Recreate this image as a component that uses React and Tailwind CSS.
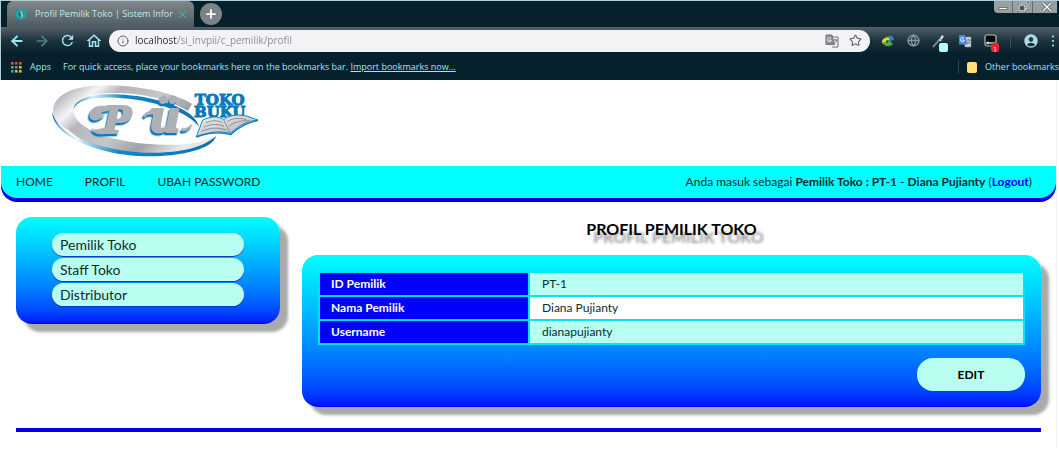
import React from "react";
import { ArrowLeft, ArrowRight, Globe, Info, Plus, Star, X } from "lucide-react";
import { MdAccountCircle, MdOutlineHome, MdRefresh } from "react-icons/md";

const menu = ["HOME", "PROFIL", "UBAH PASSWORD"];
const side = ["Pemilik Toko", "Staff Toko", "Distributor"];
const rows = [
  { id: "id", label: "ID Pemilik", value: "PT-1" },
  { id: "nama", label: "Nama Pemilik", value: "Diana Pujianty" },
  { id: "user", label: "Username", value: "dianapujianty" },
];
const dots = ["#e0503f", "#e0503f", "#e0503f", "#45b06a", "#4a90e2", "#e8b93c", "#45b06a", "#e8b93c", "#e8b93c"];

function Favicon() {
  return (
    <svg viewBox="0 0 12 12" className="size-3 shrink-0" aria-hidden="true">
      <circle cx="6" cy="6" r="5.6" fill="#12a5b4" />
      <path d="M5 2.2 7.2 4 8 8.2 6.6 10 5.6 6.5Z" fill="#f0b040" />
      <path d="M4.2 3 6 6.5 5.6 9 3.5 6Z" fill="#0d6f86" />
    </svg>
  );
}

function Logo() {
  return (
    <svg viewBox="0 0 690 255" className="block h-[85px] w-[230px]" role="img" aria-label="PU Toko Buku">
      <defs>
        <linearGradient id="silver" x1="0" y1="0" x2="1" y2="0.5">
          <stop offset="0" stopColor="#8f9398" />
          <stop offset="0.12" stopColor="#bfc1c4" />
          <stop offset="0.24" stopColor="#f5f5f6" />
          <stop offset="0.36" stopColor="#b4b6ba" />
          <stop offset="0.6" stopColor="#c6c7ca" />
          <stop offset="0.8" stopColor="#9fa2a8" />
          <stop offset="1" stopColor="#e8e8ea" />
        </linearGradient>
        <linearGradient id="edge" x1="0" y1="0" x2="1" y2="0">
          <stop offset="0" stopColor="#1d86c8" />
          <stop offset="0.15" stopColor="#d9effa" />
          <stop offset="0.4" stopColor="#1187c9" />
          <stop offset="1" stopColor="#0a6fb5" />
        </linearGradient>
        <linearGradient id="page" x1="0" y1="0" x2="1" y2="1">
          <stop offset="0" stopColor="#f1f1f2" />
          <stop offset="1" stopColor="#a7abb0" />
        </linearGradient>
      </defs>
      <path d="M37 97C33 158 165 229 325 229C430 229 520 205 528 168C496 197 420 215 335 212C170 205 55 155 37 97Z" fill="url(#edge)" />
      <path fillRule="evenodd" fill="url(#silver)" d="M190 16C90 17 38 50 39 95C42 157 180 216 330 218C420 219 498 200 522 170C486 188 430 197 365 194C225 190 104 149 100 92C98 58 145 38 225 39C320 39 400 64 444 94L456 72C400 37 290 15 190 16Z" />
      <path d="M101 87C105 55 155 40 230 43C350 48 468 88 477 141C450 97 335 57 228 53C158 50 113 59 101 87Z" fill="url(#edge)" />
      <path d="M52 128C80 145 110 165 126 186C96 170 65 150 52 128Z" fill="#fff" opacity=".8" />
      <g className="drop-shadow-[-4px_7px_0_#0c78bd]" fill="#aeb0b5" stroke="#aeb0b5" strokeWidth="6" strokeLinejoin="round">
        <path d="M206 80C166 72 144 90 150 112C157 128 184 119 193 106C180 108 176 94 206 92Z" strokeWidth="2" />
        <path d="M216 150C198 168 162 166 155 146C174 153 186 143 214 140Z" strokeWidth="2" />
        <text x="190" y="158" fontSize="112" fontFamily="DejaVu Serif, serif" fontWeight="bold" fontStyle="italic">P</text>
        <text x="326" y="157" fontSize="132" fontFamily="DejaVu Serif, serif" fontWeight="bold" fontStyle="italic">ü</text>
        <path d="M310 106C318 96 328 92 345 92L342 103C328 101 320 104 314 112Z" strokeWidth="2" />
        <path d="M424 152C440 156 450 146 456 136L452 134C446 144 438 146 426 144Z" strokeWidth="2" />
      </g>
      <g fontFamily="DejaVu Serif, serif" fontWeight="bold" fill="#0878bd" stroke="#0878bd" strokeWidth="3" fontSize="45">
        <text x="464" y="74">TOKO</text>
        <text x="462" y="110">BUKU</text>
      </g>
      <path d="M488 120C515 108 535 108 551 119C565 106 590 102 620 108L654 120C620 125 604 131 571 160C542 153 513 154 469 170Z" fill="url(#page)" stroke="#1685c4" strokeWidth="3" strokeLinejoin="round" />
      <path d="M551 119 571 160M497 129C518 120 532 120 547 128M491 141C515 131 535 131 552 139M484 154C512 142 536 142 559 150M562 124C580 114 598 113 619 119M567 138C585 125 605 120 630 123" fill="none" stroke="#7f858c" strokeWidth="2.5" />
      <path d="M469 171C511 156 545 156 572 164C604 134 627 129 654 121" fill="none" stroke="#0b78bd" strokeWidth="4" />
    </svg>
  );
}

function TranslateBadge() {
  return (
    <svg viewBox="0 0 14 14" className="size-3.5" aria-hidden="true">
      <path d="M5 3h8v10H7z" fill="#d5d8da" stroke="#7d8388" strokeWidth=".6" />
      <path d="M1 1h6l2.5 9.5H1z" fill="#4583e8" />
      <path d="M6 4.3A2 2 0 1 0 6 7V6H4.5" fill="none" stroke="#fff" strokeWidth="1" />
      <path d="M8.5 6h4M10.5 5v1M11.8 6c-.4 2-1.6 3.2-2.8 4M9.4 7.4c.6 1 1.6 1.9 2.6 2.4" fill="none" stroke="#5f6b78" strokeWidth=".8" />
    </svg>
  );
}

function Browser() {
  return (
    <header className="border-l border-t border-[#b4ccd5] bg-[#06202c] font-['Open_Sans','Noto_Sans',sans-serif] text-[#9be6f4]">
      <div className="flex h-[26px] items-start justify-between pl-1.5">
        <div className="flex h-full items-center gap-1.5">
          <div className="flex h-full w-[187px] items-center gap-2 rounded-t-md bg-linear-to-b from-[#82888c] to-[#4e5b63] pl-2 pr-1.5 text-[9px]">
            <Favicon />
            <span className="min-w-0 flex-1 whitespace-nowrap text-[#b9edf6]">Profil Pemilik Toko | Sistem Infor</span>
            <button aria-label="Close tab" className="text-[#4fa3b3]"><X className="size-[11px]" strokeWidth={2.5} /></button>
          </div>
          <button aria-label="New tab" className="grid size-[22px] place-items-center rounded-full bg-[#7b8387] text-white"><Plus className="size-3.5" strokeWidth={3} /></button>
        </div>
        <div className="mr-0.5 flex h-3 divide-x divide-[#5f696f] overflow-hidden rounded-bl-sm bg-[#98a0a4] text-white">
          <button aria-label="Minimize" className="grid w-[19px] place-items-center"><svg viewBox="0 0 12 10" className="h-2.5 w-3"><path d="M2 5.5h8v2H2z" fill="#fff" stroke="#4d565b" strokeWidth=".7" /></svg></button>
          <button aria-label="Restore" className="grid w-5 place-items-center"><svg viewBox="0 0 12 10" className="h-2.5 w-3"><path d="M4 1h6v6H8M2 3h6v6H2zM4 5h2v2H4z" fill="none" stroke="#4d565b" strokeWidth="2" /><path d="M4 1h6v6H8M2 3h6v6H2z" fill="none" stroke="#fff" /></svg></button>
          <button aria-label="Close" className="grid w-6 place-items-center pl-1"><svg viewBox="0 0 12 10" className="h-2.5 w-3"><path d="m2 1 8 8M10 1 2 9" stroke="#4d565b" strokeWidth="3" /><path d="m2 1 8 8M10 1 2 9" stroke="#fff" strokeWidth="1.5" /></svg></button>
        </div>
      </div>
      <div className="flex h-[27px] items-center bg-linear-to-b from-[#55616a] via-[#1d333e] to-[#06202c] pl-2 pr-1">
        <div className="flex shrink-0 items-center gap-[9px] pr-1.5">
          <button aria-label="Back"><ArrowLeft className="size-4" strokeWidth={2.8} /></button>
          <button aria-label="Forward" className="text-[#4e7f8b]"><ArrowRight className="size-4" strokeWidth={2.5} /></button>
          <button aria-label="Reload"><MdRefresh className="size-[17px]" /></button>
          <button aria-label="Home page"><MdOutlineHome className="size-[18px]" /></button>
        </div>
        <div className="flex h-[22px] min-w-0 flex-1 items-center gap-1.5 rounded-full bg-[#f2f3f5] px-2 text-[#5f6368]">
          <Info className="size-3 shrink-0" />
          <input aria-label="Address" defaultValue="localhost/si_invpii/c_pemilik/profil" className="min-w-0 flex-1 bg-linear-to-r from-[#26292c] from-[42px] to-[#85898d] to-[42px] bg-clip-text text-[10px] text-transparent outline-none" />
          <button aria-label="Translate this page"><svg viewBox="0 0 14 14" className="size-3.5"><path d="M5 3h8v10H7M1 1h6l2.5 9.5H1z" fill="none" stroke="#6a6f74" /><path d="M1 1h6l2.5 9.5H1z" fill="#85898d" /><path d="M6 4.3A2 2 0 1 0 6 7V6H4.5" fill="none" stroke="#fff" /><path d="M8.5 6h4M10.5 5v1M11.8 6c-.4 2-1.6 3.2-2.8 4" fill="none" stroke="#6a6f74" /></svg></button>
          <button aria-label="Bookmark this page" className="ml-1"><Star className="size-[13px]" /></button>
        </div>
        <div className="flex shrink-0 items-center gap-3 pl-[11px]">
          <button aria-label="Download manager"><svg viewBox="0 0 14 14" className="size-3.5"><path d="M1 8C2 3 7 1 12 4L9 7l3 3C8 14 2 12 1 8Z" fill="#57a944" /><path d="M1 7C3 3 7 3 9 5L7 7c-2 0-4 1-6 2Z" fill="#edce35" /><path d="M8 2c3-1 5 1 5 4L9 7Z" fill="#337dc5" /><path d="M5 6.5h3l-2 2.5Z" fill="#10252e" /></svg></button>
          <button aria-label="Web extension" className="text-[#8c979c]"><Globe className="size-[13px]" strokeWidth={2.5} /></button>
          <button aria-label="Colour picker" className="relative"><svg viewBox="0 0 14 14" className="size-3.5"><path d="M1 13 8 5" stroke="#7f9299" strokeWidth="1.8" /><path d="m6.5 6 3.500-5 2 1.500L8.500 7.500Z" fill="#d5dde0" /><path d="m7 4 3.500 3" stroke="#56686f" strokeWidth="1" /></svg><span className="absolute -bottom-1 left-[7px] size-[9px] rounded-xs bg-[#b8fff2]" /></button>
          <button aria-label="Translate"><TranslateBadge /></button>
          <button aria-label="Notifications" className="relative"><svg viewBox="0 0 14 14" className="size-3.5"><rect x="1" y="1" width="11" height="11" rx="2" fill="#05090c" stroke="#b6c1c6" strokeWidth="1.2" /><path d="M2 9h9" stroke="#c7d0d3" strokeWidth="1.5" /><circle cx="4" cy="9" r="1.5" fill="#c7d0d3" /></svg><span className="absolute -bottom-1 left-[7px] grid h-[9px] w-2 place-items-center rounded-xs bg-[#e4252b] text-[8px] text-white">1</span></button>
          <span className="h-3.5 w-px bg-[#34505b]" />
          <button aria-label="Account" className="text-[#a7dbe5]"><MdAccountCircle className="size-4" /></button>
          <button aria-label="Browser menu"><svg viewBox="0 0 4 14" className="h-3.5 w-1"><circle cx="2" cy="2.5" r="1.1" fill="currentColor" /><circle cx="2" cy="7" r="1.1" fill="currentColor" /><circle cx="2" cy="11.5" r="1.1" fill="currentColor" /></svg></button>
        </div>
      </div>
      <div className="flex h-[26px] items-center text-[9px] whitespace-nowrap">
        <a href="#apps" className="flex items-center gap-2 pl-2.5">
          <svg viewBox="0 0 11 11" className="size-[11px]" aria-hidden="true">
            {dots.map((c, i) => <rect key={i} x={(i % 3) * 4} y={Math.floor(i / 3) * 4} width="2.6" height="2.6" fill={c} />)}
          </svg>
          Apps
        </a>
        <span className="pl-3">For quick access, place your bookmarks here on the bookmarks bar. <a href="#import" className="underline">Import bookmarks now...</a></span>
        <a href="#other" className="ml-auto flex items-center gap-2 border-l border-[#294450] pl-2">
          <span className="h-[11px] w-2.5 rounded-xs bg-[#ffe07c]" />
          Other bookmarks
        </a>
      </div>
    </header>
  );
}

export default function App() {
  return (
    <div className="min-h-screen bg-white font-['Lato',sans-serif] text-[#102a2e]">
      <Browser />
      <div className="mr-0.5 border-r border-[#f0f0f0] pb-4 pl-px">
        <div className="h-[86px] pl-[39px]"><Logo /></div>
        <nav className="flex h-8 items-center justify-between rounded-b-2xl bg-[#00ffff] pl-[15px] pr-6 shadow-[0_4px_0_#0000e0]">
          <ul className="flex gap-8 text-xs">
            {menu.map((m) => <li key={m}><a href={"#" + m.toLowerCase().replace(" ", "-")}>{m}</a></li>)}
          </ul>
          <p className="text-xs">Anda masuk sebagai <b>Pemilik Toko : PT-1</b> - <b>Diana Pujianty</b> (<a href="#logout" className="font-bold text-[#0000ff]">Logout</a>)</p>
        </nav>
        <div className="flex items-start gap-[22px] px-[15px] pt-[19px]">
          <aside className="w-[264px] shrink-0 rounded-2xl bg-linear-to-b from-[#00ffff] to-[#0000ff] px-9 py-4 shadow-[8px_8px_3px_#aaaaaa]">
            <ul className="flex flex-col gap-0.5 pb-0.5 text-sm">
              {side.map((s) => (
                <li key={s}><a href={"#" + s.split(" ")[0].toLowerCase()} className="flex h-[23px] items-center rounded-full bg-[#b8fff2] pl-2 shadow-[0_1px_0_#1038c8]">{s}</a></li>
              ))}
            </ul>
          </aside>
          <main className="min-w-0 flex-1">
            <h1 className="pb-[14px] text-center text-base leading-6 font-bold text-black text-shadow-[7px_8px_3px_#999999]">PROFIL PEMILIK TOKO</h1>
            <section className="rounded-2xl bg-linear-to-b from-[#00ffff] to-[#0000ff] p-4 shadow-[8px_8px_3px_#aaaaaa]">
              <table className="w-full table-fixed border-collapse text-xs">
                <tbody>
                  {rows.map((r) => (
                    <tr key={r.id} className="h-6 bg-[#b8fff2] even:bg-white">
                      <th scope="row" className="w-[210px] border-2 border-[#00e5f5] bg-[#0000ff] px-[11px] text-left font-bold text-white">{r.label}</th>
                      <td className="border-2 border-[#00e5f5] px-3">{r.value}</td>
                    </tr>
                  ))}
                </tbody>
              </table>
              <div className="flex justify-end pt-[13px]">
                <button className="h-[33px] w-[108px] rounded-2xl bg-[#b8fff2] text-xs font-bold text-black">EDIT</button>
              </div>
            </section>
          </main>
        </div>
        <hr className="mx-[15px] mt-[21px] border-t-4 border-[#0000e0]" />
      </div>
    </div>
  );
}
